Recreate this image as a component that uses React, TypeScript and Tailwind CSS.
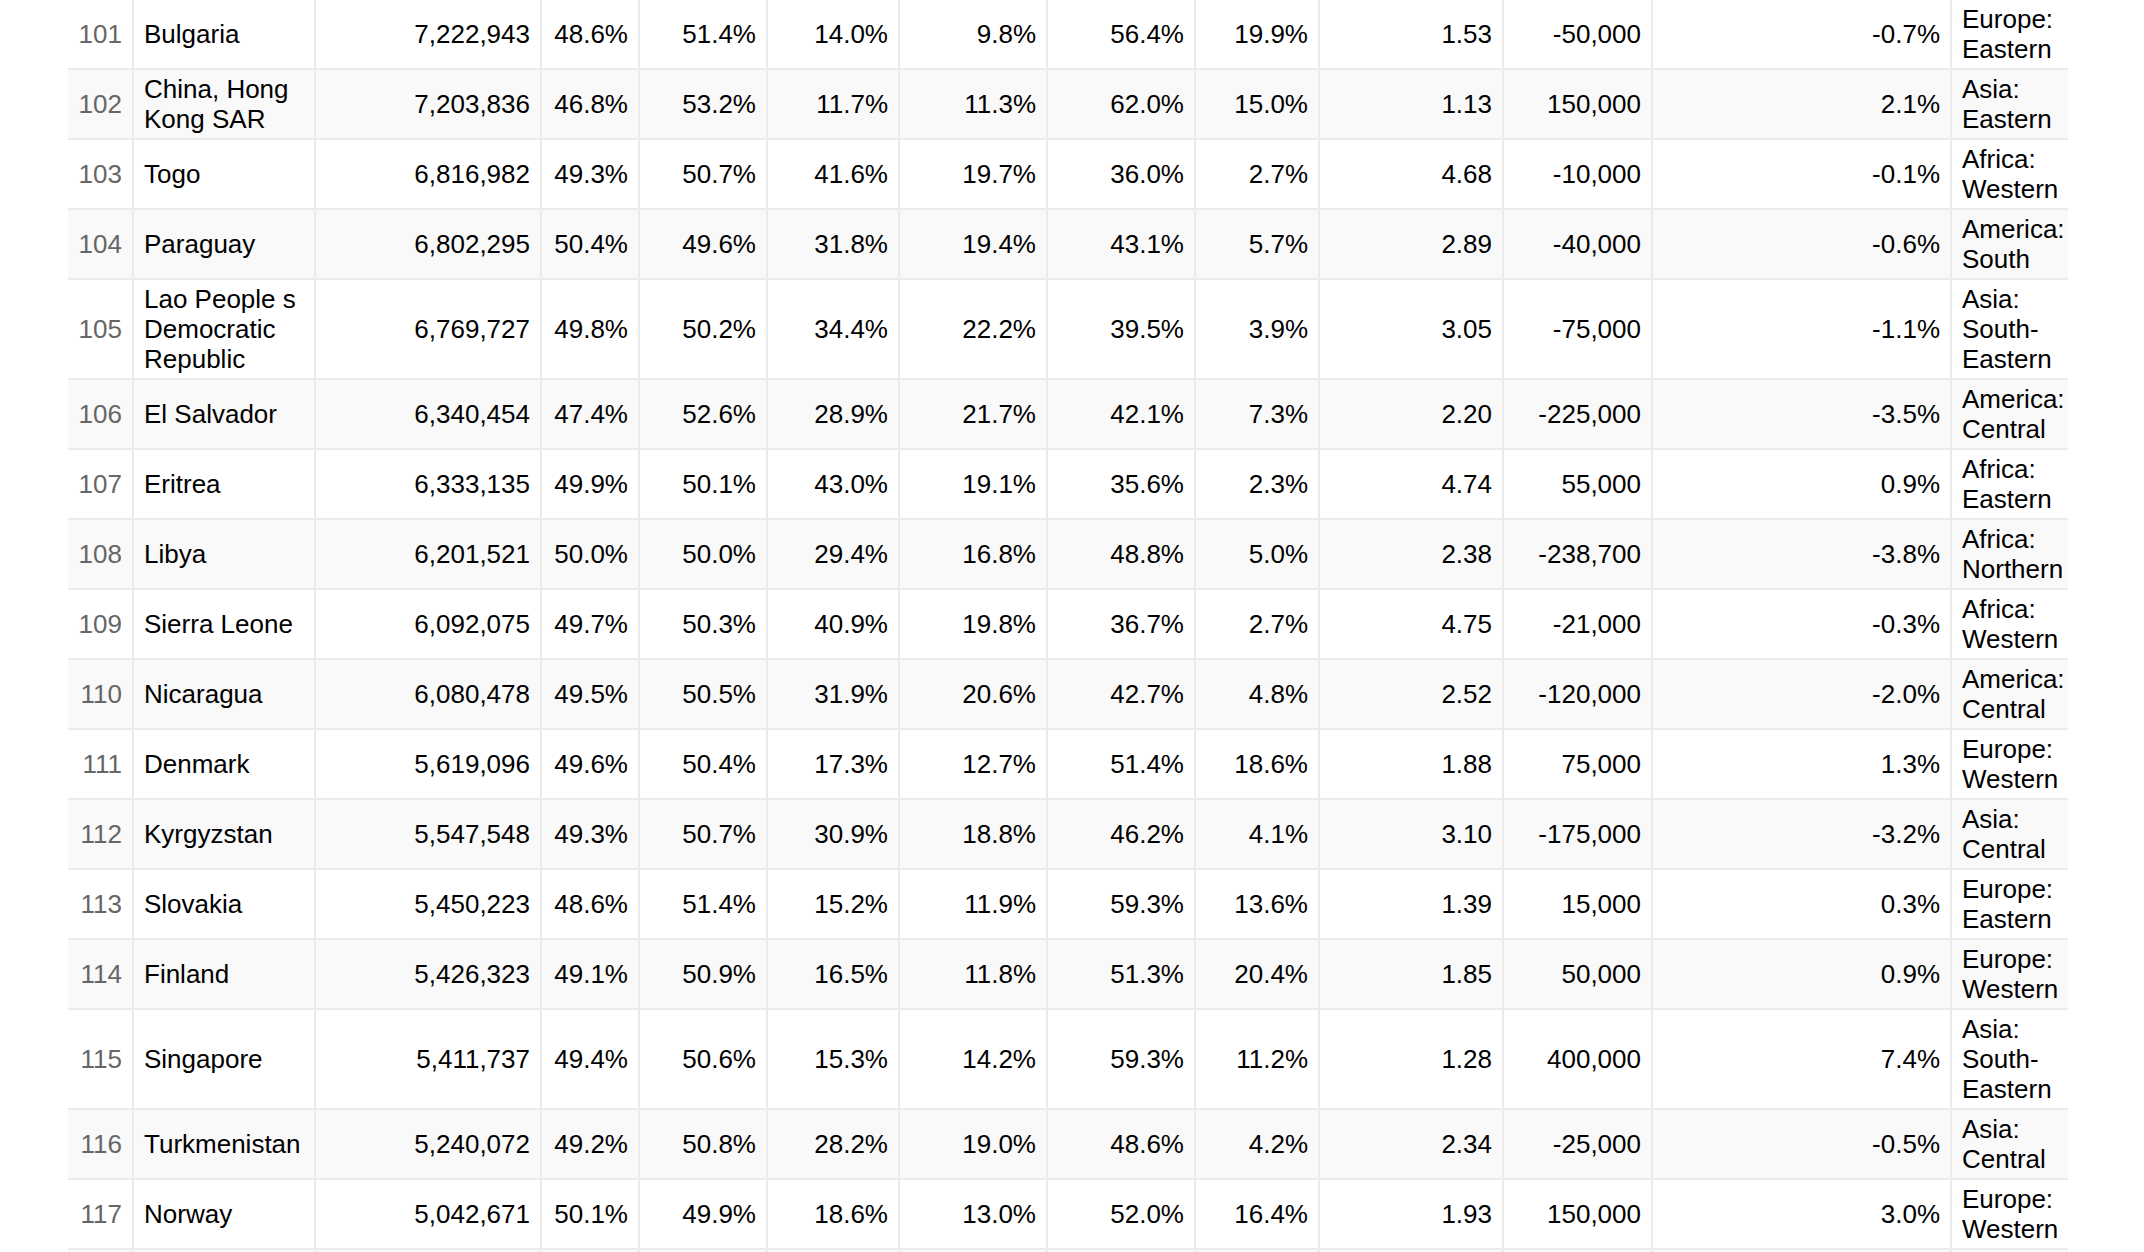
type Row = [number, string, string, string, string, string, string, string, string, string, string, string, string];

const rows: Row[] = [
  [101, "Bulgaria", "7,222,943", "48.6%", "51.4%", "14.0%", "9.8%", "56.4%", "19.9%", "1.53", "-50,000", "-0.7%", "Europe: Eastern"],
  [102, "China, Hong Kong SAR", "7,203,836", "46.8%", "53.2%", "11.7%", "11.3%", "62.0%", "15.0%", "1.13", "150,000", "2.1%", "Asia: Eastern"],
  [103, "Togo", "6,816,982", "49.3%", "50.7%", "41.6%", "19.7%", "36.0%", "2.7%", "4.68", "-10,000", "-0.1%", "Africa: Western"],
  [104, "Paraguay", "6,802,295", "50.4%", "49.6%", "31.8%", "19.4%", "43.1%", "5.7%", "2.89", "-40,000", "-0.6%", "America: South"],
  [105, "Lao People s Democratic Republic", "6,769,727", "49.8%", "50.2%", "34.4%", "22.2%", "39.5%", "3.9%", "3.05", "-75,000", "-1.1%", "Asia: South-Eastern"],
  [106, "El Salvador", "6,340,454", "47.4%", "52.6%", "28.9%", "21.7%", "42.1%", "7.3%", "2.20", "-225,000", "-3.5%", "America: Central"],
  [107, "Eritrea", "6,333,135", "49.9%", "50.1%", "43.0%", "19.1%", "35.6%", "2.3%", "4.74", "55,000", "0.9%", "Africa: Eastern"],
  [108, "Libya", "6,201,521", "50.0%", "50.0%", "29.4%", "16.8%", "48.8%", "5.0%", "2.38", "-238,700", "-3.8%", "Africa: Northern"],
  [109, "Sierra Leone", "6,092,075", "49.7%", "50.3%", "40.9%", "19.8%", "36.7%", "2.7%", "4.75", "-21,000", "-0.3%", "Africa: Western"],
  [110, "Nicaragua", "6,080,478", "49.5%", "50.5%", "31.9%", "20.6%", "42.7%", "4.8%", "2.52", "-120,000", "-2.0%", "America: Central"],
  [111, "Denmark", "5,619,096", "49.6%", "50.4%", "17.3%", "12.7%", "51.4%", "18.6%", "1.88", "75,000", "1.3%", "Europe: Western"],
  [112, "Kyrgyzstan", "5,547,548", "49.3%", "50.7%", "30.9%", "18.8%", "46.2%", "4.1%", "3.10", "-175,000", "-3.2%", "Asia: Central"],
  [113, "Slovakia", "5,450,223", "48.6%", "51.4%", "15.2%", "11.9%", "59.3%", "13.6%", "1.39", "15,000", "0.3%", "Europe: Eastern"],
  [114, "Finland", "5,426,323", "49.1%", "50.9%", "16.5%", "11.8%", "51.3%", "20.4%", "1.85", "50,000", "0.9%", "Europe: Western"],
  [115, "Singapore", "5,411,737", "49.4%", "50.6%", "15.3%", "14.2%", "59.3%", "11.2%", "1.28", "400,000", "7.4%", "Asia: South-Eastern"],
  [116, "Turkmenistan", "5,240,072", "49.2%", "50.8%", "28.2%", "19.0%", "48.6%", "4.2%", "2.34", "-25,000", "-0.5%", "Asia: Central"],
  [117, "Norway", "5,042,671", "50.1%", "49.9%", "18.6%", "13.0%", "52.0%", "16.4%", "1.93", "150,000", "3.0%", "Europe: Western"],
];

const grid =
  "grid grid-cols-[66px_182px_226px_98px_128px_132px_148px_148px_124px_184px_149px_299px_116px] border-b-2 border-[#ebebeb]";
const cell = "flex items-center px-[10px] py-[4px] border-r-2 border-[#ebebeb]";
const num = `${cell} justify-end text-right`;

export default function App() {
  return (
    <div className="h-screen overflow-hidden bg-white pl-[68px] font-['Liberation_Sans',Arial,sans-serif] text-[26px] leading-[30px] text-black">
      <div className="w-[2000px]">
        {rows.map((r, i) => (
          <div key={r[0]} className={i % 2 === 1 ? `${grid} bg-[#f9f9f9]` : `${grid} bg-white`}>
            <div className={`${num} text-[#666]`}>{r[0]}</div>
            <div className={cell}>{r[1]}</div>
            {r.slice(2, 12).map((v, j) => (
              <div key={j} className={num}>
                {v}
              </div>
            ))}
            <div className="flex items-center px-[10px] py-[4px]">{r[12]}</div>
          </div>
        ))}
        {/* next row, only its top edge shows */}
        <div className={`${grid} h-[70px] bg-[#f9f9f9]`}>
          {Array.from({ length: 12 }).map((_, j) => (
            <div key={j} className="border-r-2 border-[#ebebeb]" />
          ))}
          <div />
        </div>
      </div>
    </div>
  );
}
